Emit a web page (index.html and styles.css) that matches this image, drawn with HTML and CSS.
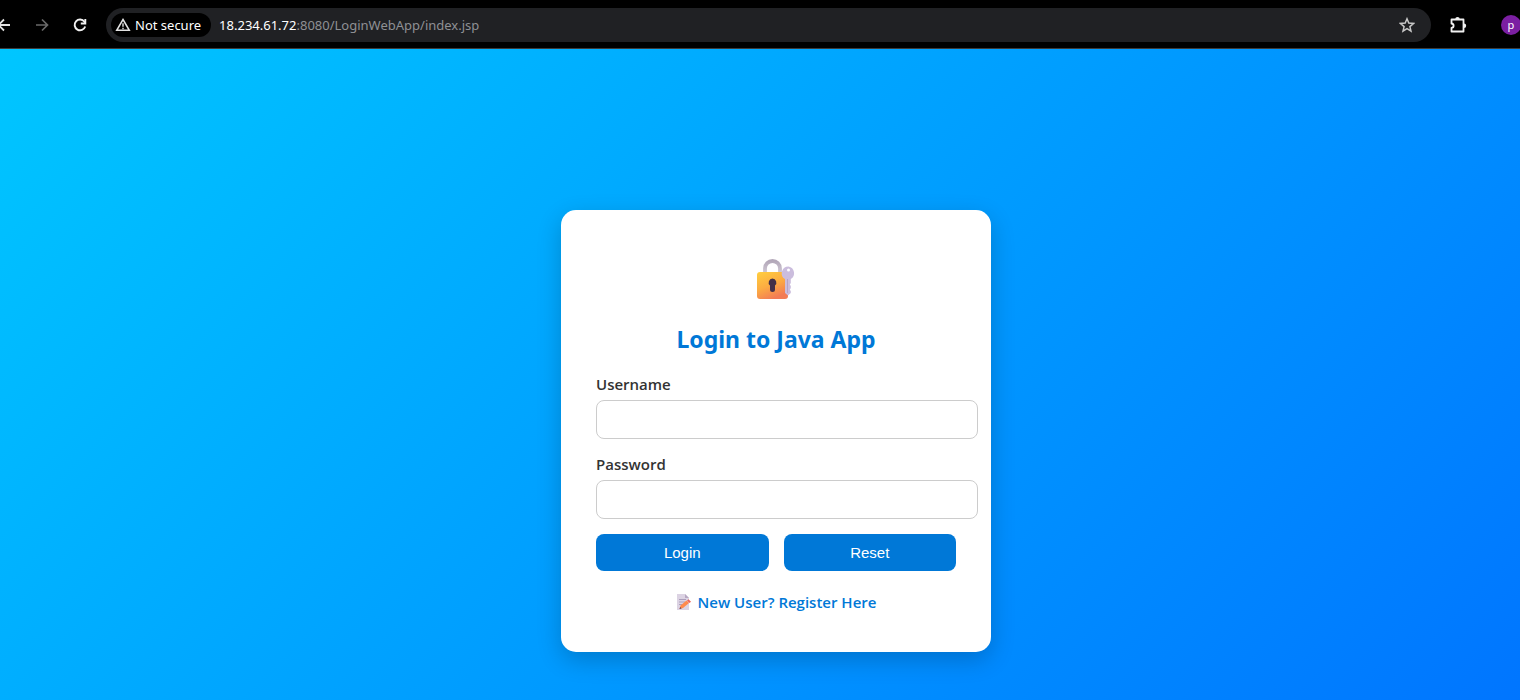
FILE: index.html
```html
<!DOCTYPE html>
<html lang="en">
<head>
<meta charset="utf-8">
<title>Login to Java App</title>
<link rel="stylesheet" href="styles.css">
</head>
<body>
<header class="toolbar">
  <nav class="nav">
    <button class="icon-btn" type="button" aria-label="Back"><svg width="16" height="16" viewBox="0 0 16 16" fill="none" stroke="#e3e3e3" stroke-width="1.800"><path d="M14 8H3M8 2.500 2.500 8 8 13.500"/></svg></button>
    <button class="icon-btn" type="button" aria-label="Forward" disabled><svg width="16" height="16" viewBox="0 0 16 16" fill="none" stroke="#6a6a6a" stroke-width="1.700"><path d="M2 8h11M8 2.500 13.500 8 8 13.500"/></svg></button>
    <button class="icon-btn" type="button" aria-label="Reload"><svg width="16" height="16" viewBox="0 0 16 16" fill="none" stroke="#f1f1f1" stroke-width="1.900"><path d="M13.200 9.500A5.400 5.400 0 1 1 12.400 4.700L13.300 6"/><path d="M13.300 2v4.500H8.800"/></svg></button>
  </nav>
  <div class="address">
    <button class="security" type="button"><svg width="16" height="16" viewBox="0 0 16 16"><path d="M8 2.500 14.300 13.300H1.700Z" fill="none" stroke="#e3e3e3" stroke-width="1.500"/><path d="M8 6.300v3.500M8 10.700v1.500" stroke="#e3e3e3" stroke-width="1.400"/></svg><span>Not secure</span></button>
    <span class="url"><span class="host">18.234.61.72</span>:8080/LoginWebApp/index.jsp</span>
    <button class="icon-btn star" type="button" aria-label="Bookmark this page"><svg width="16" height="16" viewBox="0 0 16 16" fill="none" stroke="#c7c7c7" stroke-width="1.500"><path d="m8 1.800 1.800 4.300 4.700.400-3.600 3.100 1.100 4.600L8 11.700l-4 2.500 1.100-4.600L1.500 6.500l4.700-.400Z"/></svg></button>
  </div>
  <button class="icon-btn extensions" type="button" aria-label="Extensions"><svg width="18" height="18" viewBox="0 0 18 18"><path d="M2.500 3.500h12v12h-12v-3.700c2.800-.300 2.800-4 0-4.300Z" fill="none" stroke="#f1f1f1" stroke-width="1.800" stroke-linejoin="round"/><path d="M6.300 3.100a2.200 2.200 0 0 1 4.400 0ZM15 7.500a2.200 2.200 0 0 1 0 4.400Z" fill="#f1f1f1"/></svg></button>
  <button class="avatar" type="button" aria-label="Profile">p</button>
</header>
<main class="page">
  <section class="card">
    <svg class="lock" width="40" height="42" viewBox="0 0 40 42" aria-hidden="true">
      <defs>
        <linearGradient id="gold" x1="0" y1="0" x2=".5" y2="1"><stop offset="0" stop-color="#ffcf3f"/><stop offset=".55" stop-color="#fcac42"/><stop offset="1" stop-color="#f27b55"/></linearGradient>
        <linearGradient id="steel" x1="0" y1="0" x2="0" y2="1"><stop offset="0" stop-color="#b3a8b9"/><stop offset="1" stop-color="#d5ced9"/></linearGradient>
      </defs>
      <path d="M9 16V9.500a7.500 7.500 0 0 1 15 0V16" fill="none" stroke="url(#steel)" stroke-width="3.800"/>
      <rect x="1" y="13" width="31" height="27" rx="3" fill="url(#gold)"/>
      <path d="M16.500 19.500a4 4 0 0 0-2.500 7v4a2.500 2.500 0 0 0 5 0v-4a4 4 0 0 0-2.500-7Z" fill="#433048"/>
      <path fill-rule="evenodd" d="M32.500 7.500a6.800 6.800 0 0 0-3.500 12.600V34l3 2.500 2.800-2.500v-2l-1-1.300 1-1.700v-2l-1-1.500 1-1.500v-4a6.800 6.800 0 0 0-2.300-12.500Zm0 2a1.500 1.500 0 1 1 0 3 1.500 1.500 0 0 1 0-3Z" fill="#cbbddd"/>
      <path d="M31.500 20v14" stroke="#b5a3c8" stroke-width="1"/>
    </svg>
    <h1 class="title">Login to Java App</h1>
    <form class="form">
      <label class="label" for="username">Username</label>
      <input class="field" id="username" name="username" type="text">
      <label class="label" for="password">Password</label>
      <input class="field" id="password" name="password" type="password">
      <div class="actions">
        <button class="btn" type="submit">Login</button>
        <button class="btn" type="reset">Reset</button>
      </div>
    </form>
    <a class="register" href="#register"><svg width="16" height="18" viewBox="0 0 16 18" aria-hidden="true"><path d="M1 1h8l4 4v12H1Z" fill="#dcd3e3"/><path d="M9 1v4h4Z" fill="#b7a8c2"/><path d="M3 6.500h7M3 9h6M3 11.500h3" stroke="#ad9fbc"/><path d="m3.500 16 1-3.500 6-5 2.500 2.500-6 5Z" fill="#ff8a4c"/><path d="m11 7.500 1.500-1.200 2.500 2.500-1.500 1.200Z" fill="#ed6358"/><path d="m3.500 16 .6-2 1.500 1.500Z" fill="#634158"/></svg><span>New User? Register Here</span></a>
  </section>
</main>
</body>
</html>
```
FILE: styles.css
```css
* { box-sizing: border-box; }

body {
  margin: 0;
  min-height: 100vh;
  display: flex;
  flex-direction: column;
  overflow-x: hidden;
  font-family: "Open Sans", "Noto Sans", sans-serif;
}

button {
  border: 0;
  padding: 0;
  background: none;
  font: inherit;
  cursor: pointer;
}

svg { display: block; flex: none; }

.toolbar {
  display: flex;
  align-items: center;
  height: 49px;
  padding-top: 2px;
  flex: none;
  overflow: hidden;
  background: #000;
  border-bottom: 1px solid #3c3c3c;
  color: #fff;
  font-family: "Noto Sans", sans-serif;
  font-size: 13px;
}

.nav {
  display: flex;
  gap: 22px;
  margin-left: -4px;
  margin-right: 18px;
}

.address {
  display: flex;
  flex: 1;
  align-items: center;
  gap: 8px;
  height: 34px;
  padding: 0 16px 0 5px;
  border-radius: 17px;
  background: #202124;
}

.security {
  display: flex;
  align-items: center;
  gap: 4px;
  height: 24px;
  padding: 0 10px 0 4px;
  border-radius: 12px;
  background: #000;
  color: #fff;
}

.url { flex: 1; color: #8f9094; }
.host { color: #fff; }

.extensions { margin-left: 18px; }

.avatar {
  flex: none;
  width: 20px;
  height: 20px;
  margin-left: 34px;
  margin-right: -1px;
  border-radius: 50%;
  background: #7b1fa2;
  color: #fff;
  font-size: 11px;
  line-height: 18px;
}

.page {
  flex: 1;
  display: flex;
  justify-content: center;
  align-items: flex-start;
  padding: 161px 0 48px 32px;
  background: linear-gradient(135deg, #00c6ff, #0072ff 104%);
}

.card {
  display: flex;
  flex-direction: column;
  align-items: center;
  width: 430px;
  padding: 49px 35px 40px;
  border-radius: 15px;
  background: #fff;
  box-shadow: 0 8px 25px rgba(0, 0, 0, 0.2);
}

.title {
  margin: 22px 0 19px;
  color: #0078d7;
  font-size: 23px;
  line-height: 32px;
  font-weight: 700;
  font-family: "Noto Sans", sans-serif;
}

.form { width: 100%; }

.label {
  display: block;
  margin-bottom: 5px;
  color: #333;
  font-size: 15px;
  line-height: 21px;
  font-weight: 600;
}

.field {
  display: block;
  box-sizing: content-box;
  width: 100%;
  height: 17px;
  margin-bottom: 15px;
  padding: 10px;
  border: 1px solid #ccc;
  border-radius: 8px;
  background: #fff;
  font-size: 15px;
}

.actions {
  display: flex;
  gap: 15px;
}

.btn {
  flex: 1;
  height: 37px;
  border-radius: 8px;
  background: #0078d7;
  color: #fff;
  font-family: "Liberation Sans", Arial, sans-serif;
  font-size: 15px;
}

.register {
  display: flex;
  align-items: center;
  gap: 6px;
  margin-top: 21px;
  color: #0078d7;
  font-size: 15px;
  line-height: 20px;
  font-weight: 600;
  text-decoration: none;
}
```
